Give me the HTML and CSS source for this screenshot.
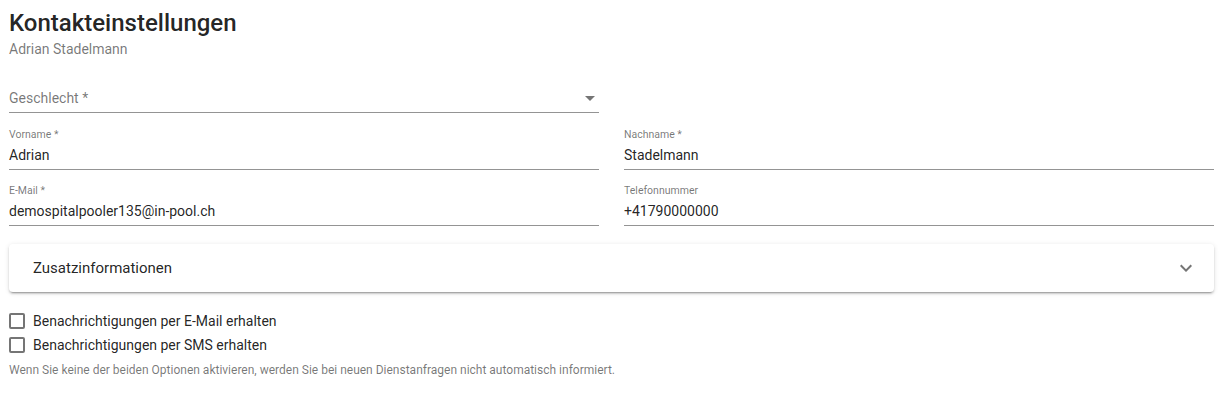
FILE: index.html
```
<!DOCTYPE html>
<html lang="de">
<head>
    <meta charset="UTF-8">
    <title>Kontakteinstellungen</title>
    <link rel="stylesheet" href="styles.css">
</head>
<body>
<div class="page">
    <h1 class="title">Kontakteinstellungen</h1>
    <div class="subtitle">Adrian Stadelmann</div>

    <div class="row">
        <div class="field select-field">
            <div class="placeholder">Geschlecht *</div>
            <span class="arrow"></span>
        </div>
        <div class="spacer"></div>
    </div>

    <div class="row first-pair">
        <div class="field">
            <label>Vorname *</label>
            <div class="value">Adrian</div>
        </div>
        <div class="field">
            <label>Nachname *</label>
            <div class="value">Stadelmann</div>
        </div>
    </div>

    <div class="row">
        <div class="field">
            <label>E-Mail *</label>
            <div class="value">demospitalpooler135@in-pool.ch</div>
        </div>
        <div class="field">
            <label>Telefonnummer</label>
            <div class="value">+41790000000</div>
        </div>
    </div>

    <div class="panel">
        <span class="panel-title">Zusatzinformationen</span>
        <svg class="chevron" width="24" height="24" viewBox="0 0 24 24">
            <path d="M7.41 8.59L12 13.17l4.59-4.58L18 10l-6 6-6-6z" fill="#757575"/>
        </svg>
    </div>

    <ul class="checks">
        <li><span class="box"></span>Benachrichtigungen per E-Mail erhalten</li>
        <li><span class="box"></span>Benachrichtigungen per SMS erhalten</li>
    </ul>
    <p class="hint">Wenn Sie keine der beiden Optionen aktivieren, werden Sie bei neuen Dienstanfragen nicht automatisch informiert.</p>
</div>
</body>
</html>
```
FILE: styles.css
```
*{
    margin: 0;
    padding: 0;
    box-sizing: border-box;
}
body{
    font-family: Roboto, "Helvetica Neue", sans-serif;
    color: rgba(0,0,0,.87);
    background: #ffffff;
}
.page{
    padding: 7px 10px 0 9px;
}
.title{
    font-size: 24px;
    font-weight: 500;
    line-height: 32px;
}
.subtitle{
    font-size: 14px;
    line-height: 20px;
    color: rgba(0,0,0,.54);
}
.row{
    display: flex;
    gap: 25px;
}
.first-pair{
    margin-top: 1px;
}
.field,
.spacer{
    flex: 1;
}
.field{
    height: 56px;
    border-bottom: 1px solid rgba(0,0,0,.42);
    padding-top: 14px;
    position: relative;
}
.field label{
    display: block;
    font-size: 10.5px;
    line-height: 14px;
    color: rgba(0,0,0,.54);
}
.field .value{
    font-size: 14px;
    line-height: 20px;
    margin-top: 3px;
}
.select-field{
    height: 54px;
    padding-top: 29px;
}
.placeholder{
    font-size: 14px;
    line-height: 20px;
    color: rgba(0,0,0,.54);
}
.arrow{
    position: absolute;
    right: 4px;
    top: 37px;
    border-left: 5px solid transparent;
    border-right: 5px solid transparent;
    border-top: 5px solid rgba(0,0,0,.54);
}
.panel{
    margin-top: 18px;
    height: 48px;
    border-radius: 4px;
    box-shadow: 0 3px 1px -2px rgba(0,0,0,.2), 0 2px 2px 0 rgba(0,0,0,.14), 0 1px 5px 0 rgba(0,0,0,.12);
    display: flex;
    align-items: center;
    justify-content: space-between;
    padding: 0 16px 0 24px;
}
.panel-title{
    font-size: 15px;
}
.checks{
    list-style: none;
    margin-top: 17px;
}
.checks li{
    display: flex;
    align-items: center;
    font-size: 14px;
    line-height: 24px;
}
.box{
    width: 16px;
    height: 16px;
    border: 2px solid rgba(0,0,0,.54);
    border-radius: 2px;
    margin-right: 8px;
}
.hint{
    margin-top: 5px;
    font-size: 12px;
    line-height: 16px;
    color: rgba(0,0,0,.54);
}
```
